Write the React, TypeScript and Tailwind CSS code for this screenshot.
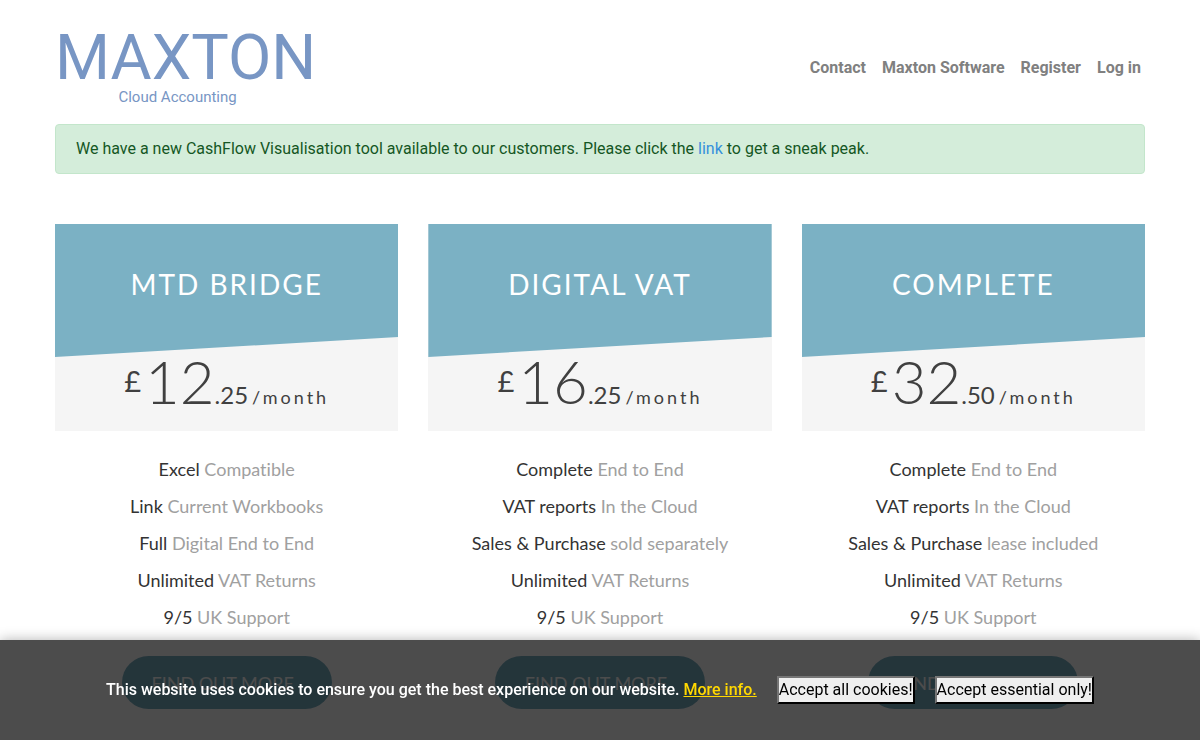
const NAV_LINKS = ["Contact", "Maxton Software", "Register", "Log in"];

const PLANS = [
  {
    name: "MTD Bridge",
    pounds: "12",
    pence: ".25",
    features: [
      ["Excel", "Compatible"],
      ["Link", "Current Workbooks"],
      ["Full", "Digital End to End"],
      ["Unlimited", "VAT Returns"],
      ["9/5", "UK Support"],
    ],
  },
  {
    name: "Digital VAT",
    pounds: "16",
    pence: ".25",
    features: [
      ["Complete", "End to End"],
      ["VAT reports", "In the Cloud"],
      ["Sales & Purchase", "sold separately"],
      ["Unlimited", "VAT Returns"],
      ["9/5", "UK Support"],
    ],
  },
  {
    name: "Complete",
    pounds: "32",
    pence: ".50",
    features: [
      ["Complete", "End to End"],
      ["VAT reports", "In the Cloud"],
      ["Sales & Purchase", "lease included"],
      ["Unlimited", "VAT Returns"],
      ["9/5", "UK Support"],
    ],
  },
];

function Logo() {
  return (
    <a href="#" className="flex flex-col items-center text-[#7896c4]">
      <span className="text-[63px] leading-[60px]">MAXTON</span>
      <span className="pr-4 text-[15px] leading-[18px]">Cloud Accounting</span>
    </a>
  );
}

function PlanCard({ plan }: { plan: (typeof PLANS)[number] }) {
  return (
    <article className="flex flex-col items-center font-[Lato,sans-serif]">
      <div className="w-full bg-[#f5f5f5]">
        {/* slanted heading */}
        <div className="flex h-[133px] justify-center bg-[#7bb1c4] pt-10 [clip-path:polygon(0_0,100%_0,100%_85%,0_100%)]">
          <h2 className="text-[28px] leading-10 tracking-[2px] text-white uppercase">{plan.name}</h2>
        </div>
        <p className="flex h-[74px] items-baseline justify-center text-[#404040]">
          <span className="self-start pt-1 text-[29px] leading-10">£</span>
          <span className="ml-1 text-[60px] leading-[48px] font-light">{plan.pounds}</span>
          <span className="text-2xl">{plan.pence}</span>
          <span className="ml-1 text-lg tracking-[3px]">/month</span>
        </p>
      </div>

      <ul className="pt-5 text-center text-lg leading-[37px] text-[#a0a0a0] [font-variant-ligatures:none]">
        {plan.features.map(([lead, rest]) => (
          <li key={lead}>
            <span className="text-[#333]">{lead}</span> {rest}
          </li>
        ))}
      </ul>

      <button className="mt-5 h-[53px] w-[210px] rounded-full bg-[#7bb1c4] pr-2 text-lg text-white uppercase">
        Find out more
      </button>
    </article>
  );
}

function CookieBar() {
  return (
    <div className="fixed inset-x-0 bottom-0 flex h-[100px] items-center justify-center bg-black/70 text-white shadow-[0_0_12px_rgba(0,0,0,0.3)]">
      <p className="font-medium">
        This website uses cookies to ensure you get the best experience on our website.{" "}
        <a href="#" className="text-[#ffd800] underline">
          More info.
        </a>
      </p>
      <button className="ml-5 border-2 border-t-[#767676] border-r-black border-b-black border-l-[#767676] bg-[#efefef] text-black">
        Accept all cookies!
      </button>
      <button className="ml-5 border-2 border-t-[#767676] border-r-black border-b-black border-l-[#767676] bg-[#efefef] text-black">
        Accept essential only!
      </button>
    </div>
  );
}

export default function App() {
  return (
    <div className="bg-white font-[Roboto,sans-serif] text-base">
      <div className="mx-auto max-w-[1120px] px-[15px]">
        <header className="flex items-center justify-between pt-7">
          <Logo />
          <nav className="flex gap-4 pt-0.5 pr-1 font-bold text-[#808080]">
            {NAV_LINKS.map((label) => (
              <a key={label} href="#">
                {label}
              </a>
            ))}
          </nav>
        </header>

        <div role="alert" className="mt-[18px] rounded border border-[#c3e6cb] bg-[#d4edda] px-5 py-3 text-[#155724]">
          We have a new CashFlow Visualisation tool available to our customers. Please click the{" "}
          <a href="#" className="text-[#3490dc]">
            link
          </a>{" "}
          to get a sneak peak.
        </div>

        <main className="mt-[50px] grid grid-cols-3 gap-[30px]">
          {PLANS.map((plan) => (
            <PlanCard key={plan.name} plan={plan} />
          ))}
        </main>
      </div>

      <CookieBar />
    </div>
  );
}
